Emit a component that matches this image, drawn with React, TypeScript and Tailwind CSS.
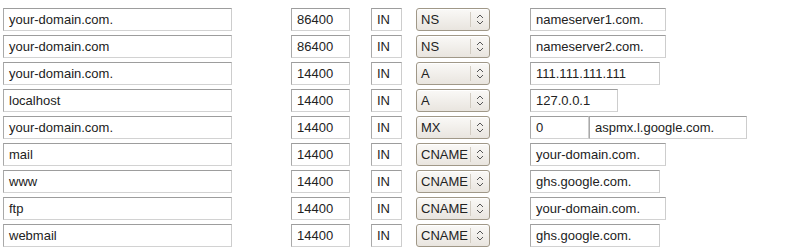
const records = [
  { name: 'your-domain.com.', ttl: '86400', type: 'NS', value: 'nameserver1.com.', w: 'w-[136px]' },
  { name: 'your-domain.com', ttl: '86400', type: 'NS', value: 'nameserver2.com.', w: 'w-[136px]' },
  { name: 'your-domain.com.', ttl: '14400', type: 'A', value: '111.111.111.111', w: 'w-[130px]' },
  { name: 'localhost', ttl: '14400', type: 'A', value: '127.0.0.1', w: 'w-[88px]' },
  { name: 'your-domain.com.', ttl: '14400', type: 'MX', priority: '0', value: 'aspmx.l.google.com.', w: 'w-[158px]' },
  { name: 'mail', ttl: '14400', type: 'CNAME', value: 'your-domain.com.', w: 'w-[136px]' },
  { name: 'www', ttl: '14400', type: 'CNAME', value: 'ghs.google.com.', w: 'w-[130px]' },
  { name: 'ftp', ttl: '14400', type: 'CNAME', value: 'your-domain.com.', w: 'w-[136px]' },
  { name: 'webmail', ttl: '14400', type: 'CNAME', value: 'ghs.google.com.', w: 'w-[130px]' },
];

const Field = ({ value, className = '' }: { value: string; className?: string }) => (
  <div
    className={`h-[23px] shrink-0 border border-t-[#9d9d9d] border-l-[#a9a9a9] border-r-[#cdcdcd] border-b-[#d2d2d2] bg-white pl-[5px] text-[13px] leading-[21px] text-[#222] whitespace-nowrap overflow-hidden ${className}`}
  >
    {value}
  </div>
);

const Select = ({ value }: { value: string }) => (
  <div className="ml-[14px] flex h-[23px] w-[74px] shrink-0 items-center rounded-[3px] border border-[#a09888] bg-gradient-to-b from-[#faf9f7] to-[#e9e5df] text-[13px] text-[#222] shadow-[inset_0_1px_0_#fff]">
    <span className="flex-1 pl-[4px] leading-[21px]">{value}</span>
    <span className="h-[15px] w-px bg-[#d2ccc2]" />
    <svg width="18" height="21" viewBox="0 0 18 21" className="shrink-0">
      <path d="M6 9 L9 6 L12 9" fill="none" stroke="#555" strokeWidth="1" />
      <path d="M6 12 L9 15 L12 12" fill="none" stroke="#555" strokeWidth="1" />
    </svg>
  </div>
);

export default function App() {
  return (
    <div className="w-[788px] h-[252px] bg-white pt-[8px] font-['Liberation_Sans',Arial,sans-serif]">
      <div className="flex flex-col gap-[4px]">
        {records.map((r, i) => (
          <div key={i} className="flex items-center">
            <Field value={r.name} className="ml-[3px] w-[229px]" />
            <Field value={r.ttl} className="ml-[59px] w-[59px]" />
            <Field value="IN" className="ml-[21px] w-[31px]" />
            <Select value={r.type} />
            {r.priority ? (
              <>
                <Field value={r.priority} className="ml-[40px] w-[59px]" />
                <Field value={r.value} className={r.w} />
              </>
            ) : (
              <Field value={r.value} className={`ml-[40px] ${r.w}`} />
            )}
          </div>
        ))}
      </div>
    </div>
  );
}
